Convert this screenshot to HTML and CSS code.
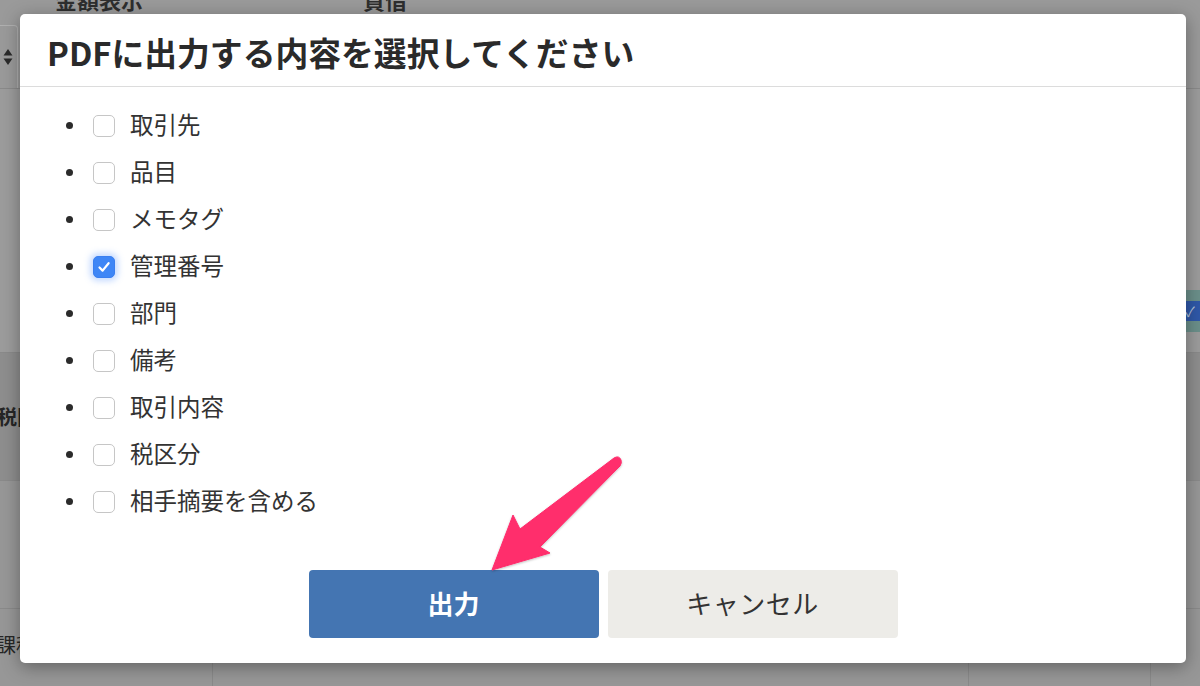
FILE: index.html
```html
<!DOCTYPE html>
<html lang="ja">
<head>
<meta charset="utf-8">
<title>PDF出力</title>
<link rel="stylesheet" href="styles.css">
</head>
<body>
<div class="page">
  <div class="bg-head">
    <span class="bg-col bg-col-amount">金額表示</span>
    <span class="bg-col bg-col-side">貸借</span>
  </div>
  <div class="bg-row bg-row-sort">
    <div class="bg-select">
      <svg class="sort" width="10" height="18" viewBox="0 0 10 18"><path d="M5 1 L9.5 7.5 H0.5 Z M5 17 L9.5 10.5 H0.5 Z" fill="#2b2b2b"/></svg>
    </div>
  </div>
  <div class="bg-row bg-row-main">
    <div class="bg-band"><span class="bg-check">✓</span></div>
  </div>
  <div class="bg-row bg-row-tax"><span class="bg-label">税区</span></div>
  <div class="bg-row bg-row-plain"></div>
  <div class="bg-row bg-row-last">
    <span class="bg-text">課税</span>
    <div class="bg-cols">
      <span class="vline v1"></span>
      <span class="vline v2"></span>
      <span class="vline v3"></span>
    </div>
  </div>
</div>

<div class="modal">
  <div class="modal-header">
    <h2 class="modal-title">PDFに出力する内容を選択してください</h2>
  </div>
  <div class="modal-body">
    <ul class="opt-list">
      <li class="opt"><span class="box"></span><span class="opt-label">取引先</span></li>
      <li class="opt"><span class="box"></span><span class="opt-label">品目</span></li>
      <li class="opt"><span class="box"></span><span class="opt-label">メモタグ</span></li>
      <li class="opt"><span class="box checked"><svg viewBox="0 0 20 20" width="20" height="20"><path d="M5.5 10.5 L8.6 13.6 L14.6 6.2" fill="none" stroke="#fff" stroke-width="2.2" stroke-linecap="round" stroke-linejoin="round"/></svg></span><span class="opt-label">管理番号</span></li>
      <li class="opt"><span class="box"></span><span class="opt-label">部門</span></li>
      <li class="opt"><span class="box"></span><span class="opt-label">備考</span></li>
      <li class="opt"><span class="box"></span><span class="opt-label">取引内容</span></li>
      <li class="opt"><span class="box"></span><span class="opt-label">税区分</span></li>
      <li class="opt"><span class="box"></span><span class="opt-label">相手摘要を含める</span></li>
    </ul>
    <div class="actions">
      <button class="btn btn-primary">出力</button>
      <button class="btn btn-cancel">キャンセル</button>
    </div>
  </div>
</div>

<svg class="arrow" width="1200" height="686" viewBox="0 0 1200 686">
  <defs>
    <filter id="sh" x="-20%" y="-20%" width="140%" height="140%">
      <feDropShadow dx="0" dy="1" stdDeviation="1.2" flood-color="#000" flood-opacity="0.25"/>
    </filter>
  </defs>
  <path d="M492 570 L513 515 L520 529 L614 458 Q619 455 621 460 Q622 463 620 466 L540 547 L550 553 Z" fill="#ff2d6c" stroke="#ff2d6c" stroke-width="1" stroke-linejoin="round" filter="url(#sh)"/>
</svg>
</body>
</html>
```

FILE: styles.css
```css
* { box-sizing: border-box; }

html, body {
  margin: 0;
  padding: 0;
}

body {
  width: 1200px;
  height: 686px;
  overflow: hidden;
  position: relative;
  background: #9a9a9a;
  font-family: "Noto Sans CJK JP", "Noto Sans", sans-serif;
  color: #333;
}

/* ---------- dimmed page behind the dialog ---------- */
.page {
  display: flex;
  flex-direction: column;
  height: 686px;
}

.bg-head {
  height: 25px;
  display: flex;
  align-items: flex-start;
  overflow: hidden;
}

.bg-col {
  font-size: 22px;
  font-weight: 700;
  line-height: 22px;
  margin-top: -12px;
  color: #2e2e2e;
}

.bg-col-amount { margin-left: 55px; }
.bg-col-side { margin-left: 220px; }

.bg-row {
  border-bottom: 1px solid #8a8a8a;
  position: relative;
}

.bg-row-sort {
  height: 64px;
  display: flex;
}

.bg-select {
  width: 18px;
  height: 63px;
  border-right: 1px solid #b0b0b0;
  border-top: 1px solid #b0b0b0;
  border-radius: 0 4px 0 0;
  display: flex;
  align-items: center;
  padding-left: 3px;
}

.sort {
  display: block;
}

.bg-row-main {
  height: 264px;
  background: #9c9c9c;
  display: flex;
  justify-content: flex-end;
  align-items: flex-start;
  padding-top: 201px;
}

.bg-band {
  width: 30px;
  height: 42px;
  background: #6b8f8a;
  display: flex;
  align-items: center;
  justify-content: flex-end;
}

.bg-check {
  width: 20px;
  height: 20px;
  background: #2f58a8;
  border-radius: 4px 0 0 4px;
  color: #b8c4d8;
  font-size: 14px;
  line-height: 20px;
  text-align: center;
}

.bg-row-tax {
  height: 128px;
  background: #8e8e8e;
  display: flex;
  align-items: center;
}

.bg-label {
  font-size: 20px;
  font-weight: 700;
  color: #262626;
  margin-left: -3px;
}

.bg-row-plain {
  height: 128px;
  background: #979797;
}

.bg-row-last {
  flex: 1;
  border-bottom: none;
  background: #979797;
  position: relative;
}

.bg-text {
  display: block;
  font-size: 20px;
  color: #262626;
  margin-top: 21px;
  margin-left: -4px;
}

.bg-cols {
  position: absolute;
  left: 0;
  right: 0;
  bottom: 0;
  height: 30px;
}

.vline {
  position: absolute;
  top: 0;
  bottom: 0;
  width: 1px;
  background: #8a8a8a;
}
.v1 { left: 212px; }
.v2 { left: 968px; }
.v3 { left: 1150px; }

/* ---------- dialog ---------- */
.modal {
  position: absolute;
  left: 20px;
  top: 14px;
  width: 1166px;
  height: 649px;
  background: #fff;
  border-radius: 5px;
  box-shadow: 0 4px 18px rgba(0, 0, 0, 0.35);
  display: flex;
  flex-direction: column;
}

.modal-header {
  height: 73px;
  border-bottom: 1px solid #dcdcdc;
  display: flex;
  align-items: center;
  padding-left: 27px;
  padding-top: 5px;
}

.modal-title {
  margin: 0;
  font-size: 32.8px;
  font-weight: 700;
  color: #2a2a2a;
  line-height: 1;
}

.modal-body {
  flex: 1;
  padding: 15px 0 25px;
  display: flex;
  flex-direction: column;
}

.opt-list {
  list-style: none;
  margin: 0;
  padding: 0 0 0 46px;
}

.opt {
  height: 47px;
  display: flex;
  align-items: center;
}

.opt::before {
  content: "";
  width: 7px;
  height: 7px;
  border-radius: 50%;
  background: #2b2b2b;
  margin-right: 20px;
  flex: none;
}

.box {
  width: 22px;
  height: 22px;
  border: 1.5px solid #c6c6c6;
  border-radius: 5px;
  background: #fff;
  flex: none;
  display: flex;
  align-items: center;
  justify-content: center;
}

.box.checked {
  background: #3e86f6;
  border-color: #3a7ff0;
  box-shadow: 0 0 6px 3px rgba(90, 150, 255, 0.35);
}

.opt-label {
  margin-left: 15px;
  font-size: 23.5px;
  color: #333;
  line-height: 1;
  padding-bottom: 2px;
}

.actions {
  margin-top: auto;
  display: flex;
  justify-content: center;
  gap: 9px;
}

.btn {
  width: 290px;
  height: 68px;
  border: none;
  border-radius: 4px;
  font-family: "Noto Sans CJK JP", "Noto Sans", sans-serif;
  font-size: 26px;
  line-height: 1;
  padding: 0 0 2px;
  cursor: pointer;
}

.btn-primary {
  background: #4475b2;
  color: #fff;
  font-weight: 700;
}

.btn-cancel {
  background: #edece8;
  color: #333;
  letter-spacing: 0.5px;
}

/* annotation arrow drawn over the screenshot */
.arrow {
  position: absolute;
  left: 0;
  top: 0;
  pointer-events: none;
}
```
